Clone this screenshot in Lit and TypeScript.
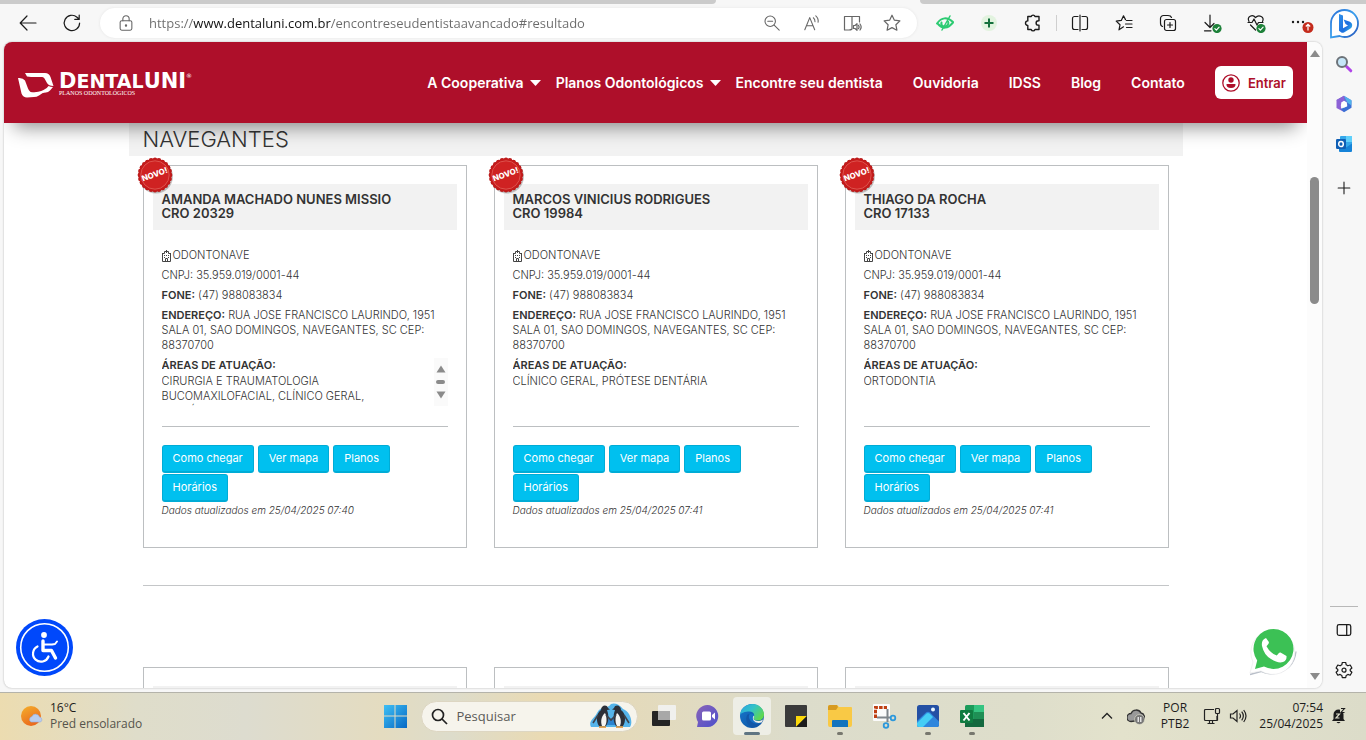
import { LitElement, html, css, svg, nothing } from "lit";
import { customElement, property } from "lit/decorators.js";

interface Dentist {
  name: string;
  cro: string;
  areas: string;
  updated: string;
  scroll?: boolean;
}

const DENTISTS: Dentist[] = [
  {
    name: "AMANDA MACHADO NUNES MISSIO",
    cro: "CRO 20329",
    areas: "CIRURGIA E TRAUMATOLOGIA BUCOMAXILOFACIAL, CLÍNICO GERAL, DENTÍSTICA",
    updated: "25/04/2025 07:40",
    scroll: true,
  },
  { name: "MARCOS VINICIUS RODRIGUES", cro: "CRO 19984", areas: "CLÍNICO GERAL, PRÓTESE DENTÁRIA", updated: "25/04/2025 07:41" },
  { name: "THIAGO DA ROCHA", cro: "CRO 17133", areas: "ORTODONTIA", updated: "25/04/2025 07:41" },
];

const line = (size: number, body: unknown, color = "#1b1b1b") => html`
  <svg width=${size} height=${size} viewBox="0 0 20 20" fill="none" stroke=${color} stroke-width="1.2"
    stroke-linecap="round" stroke-linejoin="round" aria-hidden="true">${body}</svg>`;

const art = (w: number, h: number, body: unknown) => html`
  <svg width=${w} height=${h} viewBox="0 0 ${w} ${h}" aria-hidden="true">${body}</svg>`;

const check = svg`<circle cx="15" cy="15.5" r="4.6" fill="#1d8139" stroke="none"/><path d="M12.9 15.6l1.5 1.5 2.7-2.9" stroke="#fff"/>`;

const icons = {
  back: line(20, svg`<path d="M18 10H2.5M9 3L2.2 10 9 17"/>`),
  reload: line(20, svg`<path d="M17.6 10A7.7 7.7 0 1 1 15 4.2L17 6M17.2 2v4.4h-4.4"/>`),
  lock: line(18, svg`<rect x="3.5" y="7.5" width="13" height="10.5" rx="1.8"/><path d="M6.5 7.5V5.4a3.5 3.5 0 0 1 7 0v2.1"/><circle cx="10" cy="12.8" r=".7" fill="#666"/>`, "#666"),
  zoomOut: line(18, svg`<circle cx="8" cy="8" r="5.8"/><path d="M12.4 12.4L18 18M5.3 8h5.4"/>`, "#666"),
  read: line(18, svg`<path d="M2 17.5L7.5 4 13 17.5M4 13h7M11.5 4.2q2 1.6 1.8 4.3M14.2 2q3.2 2.6 2.6 7.2"/>`, "#666"),
  reader: line(20, svg`<path d="M10 3.5V16M10 16c-1 1-2 1-3 1H2.5V3.5H10M10 3.5h7.5V9"/><path d="M11.5 12.5v3h1.5l2 1.8v-6.6l-2 1.8zM16.5 12.3q1.2 1.7 0 3.4M18 11q2.3 3 0 6" />`, "#666"),
  star: line(20, svg`<path d="M10 2.2l2.4 5 5.5.7-4 3.9 1 5.4-4.9-2.6-4.9 2.6 1-5.4-4-3.9 5.5-.7z"/>`, "#666"),
  eye: html`<svg width="20" height="20" viewBox="0 0 20 20" fill="none" stroke="#2ccb72" stroke-width="2" stroke-linecap="round" aria-hidden="true">
    <path d="M2 10.5q7-9.5 16-1.5M3 11q7 8 15-1.5" /><path d="M6.5 9.5a3.2 3.2 0 0 0 2 4M13 8.5a3.3 3.3 0 0 1-2.5 4.8"/><path d="M15 3L7 17" stroke-width="1.5"/></svg>`,
  plus: html`<svg width="20" height="20" viewBox="0 0 20 20" aria-hidden="true"><circle cx="10" cy="10" r="8" fill="#e2f3df"/><path d="M10 5.5v9M5.5 10h9" stroke="#14703c" stroke-width="2"/></svg>`,
  puzzle: line(20, svg`<path d="M6 3.5h2.2a2 2 0 0 1 3.8 0h4v4.2h-.7a2.2 2.2 0 0 0 0 4.4h.7v4.4h-4a2 2 0 0 1-3.8 0H4.800v-4a2.300 2.300 0 1 1 0-4.600V3.500z" stroke-width="1.4"/>`),
  split: line(20, svg`<path d="M8 3.5H4.5a2 2 0 0 0-2 2v9a2 2 0 0 0 2 2H8M12 3.5h3.5a2 2 0 0 1 2 2v9a2 2 0 0 1-2 2H12M10 2v16"/>`),
  favorites: line(20, svg`<path d="M9.5 13.8L5 16.8l1-5-3.800-3.700 5.100-.7L9.500 2.800l2 3.800M12.500 7.500H18M11.500 11H18M12.500 14.500H18"/>`),
  collections: line(20, svg`<rect x="6.5" y="6.5" width="11" height="11" rx="2"/><path d="M12 9.5v5M9.5 12h5M4.5 13.5C2.8 13 2.5 11.5 2.5 10V5.5a3 3 0 0 1 3-3H10c1.600 0 3 .5 3.500 2"/>`),
  download: line(20, svg`<path d="M8 2v12M3 9.5l5 5 4-4M2.5 17.8H9"/>${check}`),
  heart: line(20, svg`<path d="M3 8.5C.5 3.5 6.5.8 9.5 4.5 13 .8 18.800 4 16.500 8.500M2 9.500h4l2-3.500 3 6 1.500-2.500H17M4.500 12l5 5"/>${check}`),
  dots: html`<svg width="28" height="20" viewBox="0 0 28 20" aria-hidden="true"><g fill="#1b1b1b"><circle cx="7" cy="9" r="1.2"/><circle cx="12" cy="9" r="1.2"/><circle cx="17" cy="9" r="1.2"/></g><circle cx="22" cy="14.5" r="5.5" fill="#c42b1c"/><path d="M22 17.5v-6M19.8 13.5l2.2-2.2 2.2 2.2" stroke="#fff" stroke-width="1.2" fill="none"/></svg>`,
  bing: art(30, 32, svg`
    <defs><linearGradient id="bg" x1="0" y1="0" x2="1" y2="1"><stop offset="0" stop-color="#2a6fd6"/><stop offset=".5" stop-color="#3aa0ee"/><stop offset="1" stop-color="#2451b8"/></linearGradient>
    <linearGradient id="bb" x1="0" y1="0" x2="1" y2="1"><stop offset="0" stop-color="#2d8fe8"/><stop offset=".6" stop-color="#1e6fe0"/><stop offset="1" stop-color="#35c4e8"/></linearGradient></defs>
    <path d="M2 29.5V15.5A13.5 13.5 0 1 1 15.5 29q-2.500 0-5-1z" fill="#fff" stroke="url(#bg)" stroke-width="1.8"/>
    <path d="M10 6l4 1.6v12.6l5-2.8-2.500-1.300-1.900-4.700 6.300 2.400q3 1.600 2.100 4.700-.5 1.500-2.300 2.600l-5.700 3.300q-1.600.8-3-.2L10 22.700z" fill="url(#bb)"/>`),
  sideSearch: art(18, 18, svg`<path d="M11.5 11.5l4.3 4.3" stroke="#b044e8" stroke-width="3" stroke-linecap="round"/><circle cx="7" cy="7" r="5" fill="#c5e6f8" stroke="#6c7278" stroke-width="2"/>`),
  copilot: art(18, 18, svg`<path d="M9 .8l7 4.2-3.2 5L9 6.5 5.5 10 1.5 5z" fill="#6a6fd8"/><path d="M1.5 5L9 .8v5.7L5.8 9.2 6 13 9 17 1.5 13z" fill="#8d62d6"/><path d="M16.5 5.2v7.6L9 17.2 5.5 14l6.6-2.5.4-4z" fill="#3b6fd4"/><path d="M9 1l7.5 4.2-.3 5-3.7-2.4z" fill="#4fb3ec"/><path d="M9 5.8L11.9 7.4v3.3L9 12.4 6.2 10.7V7.4z" fill="#fff"/>`),
  outlook: art(18, 18, svg`<rect x="5" y="1" width="12" height="14" rx="1" fill="#35a8ea"/><path d="M11 1h6v6h-6z" fill="#5fd0fb"/><path d="M4 8.5l7 4 6-4V16a1 1 0 0 1-1 1H5a1 1 0 0 1-1-1z" fill="#1583d8"/><rect x="1" y="4" width="10" height="10" rx="1.2" fill="#0f5fb5"/><ellipse cx="6" cy="9" rx="2.3" ry="2.6" fill="none" stroke="#fff" stroke-width="1.5"/>`),
  add: line(18, svg`<path d="M10 3.5v13M3.5 10h13"/>`),
  panel: line(18, svg`<rect x="2.5" y="4" width="15" height="12" rx="2" stroke-width="1.4"/><path d="M13 4v12" stroke-width="1.4"/>`),
  gear: line(20, svg`<path d="M8.3 2.5h3.4l.5 2.3 1.7 1 2.3-.8 1.7 3-1.7 1.5v1.200l1.700 1.500-1.700 3-2.300-.8-1.700 1-.5 2.200H8.300l-.5-2.200-1.700-1-2.300.8-1.700-3 1.700-1.500V9.500L2.100 8l1.700-3 2.300.8 1.700-1z"/><circle cx="10" cy="10.2" r="2"/>`),
};

const taskIcons = {
  windows: art(24, 24, svg`<defs><linearGradient id="wn" x1="0" y1="0" x2="1" y2="1"><stop offset="0" stop-color="#3fc0f5"/><stop offset="1" stop-color="#0668c4"/></linearGradient></defs><path d="M1 1h10.5v10.5H1zM12.5 1H24v10.5H12.5zM1 12.5h10.5V24H1zM12.5 12.5H24V24H12.5z" fill="url(#wn)"/>`),
  view: art(24, 24, svg`<rect x="0" y="7" width="18" height="15" rx="1" fill="#242424"/><rect x="6" y="1" width="18" height="15" rx="1" fill="#f2f2f2" opacity=".9"/><rect x="6" y="7" width="12" height="9" fill="#a8a8a8"/>`),
  chat: art(24, 24, svg`<defs><linearGradient id="ch" x1="0" y1="0" x2="1" y2="1"><stop offset="0" stop-color="#8a63b8"/><stop offset="1" stop-color="#4c50cc"/></linearGradient></defs><path d="M1 23l1-5A11 11 0 1 1 12 23z" fill="url(#ch)"/><rect x="6" y="7.5" width="9" height="9" rx="1.5" fill="#fff"/><path d="M16 11l3-2.500v7L16 13z" fill="#fff"/>`),
  edge: art(26, 26, svg`<defs><linearGradient id="e1" x1="0" y1="0" x2="1" y2=".6"><stop offset="0" stop-color="#2aa3e0"/><stop offset=".5" stop-color="#33c2c9"/><stop offset="1" stop-color="#5fd84f"/></linearGradient><linearGradient id="e2" x1="0" y1="0" x2="1" y2="1"><stop offset="0" stop-color="#1878cf"/><stop offset="1" stop-color="#0c4f9c"/></linearGradient></defs>
    <circle cx="13" cy="13" r="12" fill="url(#e2)"/><path d="M1 12C2 4.5 8 1 13.5 1 20 1 25 6 25 11.5c0 4-3 6-6 6-3.500 0-5-1.500-4.500-3 1.500-1.500 1-6-4-6C6 8.500 2 10 1 12z" fill="url(#e1)"/><path d="M9.5 12.5c-2 4 1 9.500 7 9.500 3 0 5-1 6.500-2.500-1.500.5-8 1-9-4.500-.2-1.500.8-2.500.5-3.500-1.200-1.500-4-1-5 1z" fill="#1672c8"/><path d="M14.5 12.5q1.500 1 0 2.500c0 2 2 3 4.500 3 2 0 4-.5 5.300-2l-1.500 3.500q-6 1.500-8.300-2-1.500-2.500 0-5z" fill="#eeeee6"/><path d="M8.5 11.5C5.5 16 8 23 14 24.500c3.500-.3 7-2.500 8.800-5C18 22 11.500 20 10 15c-.3-1.500 0-3 .5-4z" fill="#1257a8"/>`),
  notes: art(24, 24, svg`<rect x="1" y="1" width="22" height="22" rx="1" fill="#3a3a3a"/><path d="M12 12h11L12 23z" fill="#fbd80a"/><path d="M12 23l11-11v11z" fill="#1c1c1c"/>`),
  folder: art(26, 24, svg`<path d="M1 3a2 2 0 0 1 2-2h7l2 2h12a1 1 0 0 1 1 1v17a2 2 0 0 1-2 2H3a2 2 0 0 1-2-2z" fill="#f9c945"/><path d="M1 3a2 2 0 0 1 2-2h7l1 2-2 3H1z" fill="#d79a20"/><path d="M5 17a1 1 0 0 1 1-1h14a1 1 0 0 1 1 1v6H5z" fill="#1273bd"/>`),
  snip: art(26, 26, svg`<rect x="2" y="1" width="17" height="17" rx="1" fill="#fbfbfb"/><path d="M4.5 15V4.5H16" stroke="#bf3f12" stroke-width="3" fill="none" stroke-dasharray="3.5 1.2"/><path d="M6 14.5h13M16.5 6v13" stroke="#80868c" stroke-width="2"/><circle cx="22" cy="15" r="2.3" fill="none" stroke="#2c98dc" stroke-width="1.8"/><circle cx="15" cy="22.5" r="2.3" fill="none" stroke="#2c98dc" stroke-width="1.8"/>`),
  photos: art(24, 24, svg`<rect x="1" y="1" width="22" height="22" rx="2.5" fill="#2450a4"/><path d="M1 17L10 8.500q2-1.700 4 0l9 9V21q0 2-2 2H3q-2 0-2-2z" fill="#2f86dc"/><path d="M1 19L10.500 9.500q1.500-1.200 3 0L17 13 7 23H3q-2 0-2-2z" fill="#45cdf5"/><circle cx="17" cy="5.5" r="2" fill="#e8f6ff"/>`),
  excel: art(26, 24, svg`<rect x="6" y="1" width="19" height="22" rx="1.5" fill="#1c9c5b"/><path d="M15 1h10v7H15z" fill="#35c481"/><path d="M6 15h19v8H6z" fill="#14693f"/><path d="M15 8h10v7H15z" fill="#1f8f55"/><rect x="1" y="6" width="13" height="13" rx="1" fill="#107c41"/><path d="M4.5 9l6 7.5M10.5 9l-6 7.5" stroke="#fff" stroke-width="2"/>`),
  penguins: art(44, 26, svg`<path d="M2 24C-1 18 5 16 8 10 12 2 18 7 22 1q6-2 12 5c8 3 10 14 7 18z" fill="#55b4ea"/><path d="M12 22h22v-4l-10-3-12 3z" fill="#2b83cf"/>
    <path d="M10 23C7 19 7 10 12 7c0-5 6-6 7-2l2 1.500-3 .5c2 5 2 12-1 16z" fill="#2c3039"/><path d="M13 23c-2-5 0-11 3-13 2 4 2 10 0 13z" fill="#f4f4f2"/><path d="M34 23c3-4 3-13-2-16 0-5-6-6-7-2l-2 1.500 3 .5c-2 5-2 12 1 16z" fill="#2c3039"/><path d="M31 23c2-5 0-11-3-13-2 4-2 10 0 13z" fill="#f4f4f2"/>
    <path d="M9 12L4 20M17 12l5 5 5-5M35 12l5 8" stroke="#3d424c" stroke-width="1.6" fill="none"/><path d="M10 24h7M27 24h7" stroke="#e08c2a" stroke-width="1.5"/>`),
  weather: art(24, 22, svg`<defs><linearGradient id="sun" x1="0" y1="0" x2=".5" y2="1"><stop offset="0" stop-color="#f5b02c"/><stop offset="1" stop-color="#ea6a1d"/></linearGradient></defs><circle cx="11" cy="11" r="10" fill="url(#sun)"/><path d="M11 17a3 3 0 0 1 1-5.500 4 4 0 0 1 7.500.5 2.700 2.700 0 0 1 1 5z" fill="#b9cdee" stroke="#93aadb" stroke-width=".6"/>`),
};

@customElement("dentist-card")
export class DentistCard extends LitElement {
  @property({ attribute: false }) dentist!: Dentist;

  static styles = css`
    :host { display: block; position: relative; border: 1px solid #bcbfc1; font: 300 11px/15px Inter, sans-serif; color: #333; min-height: 381px; background: #fff; }
    .badge { position: absolute; left: -8px; top: -10px; width: 40px; height: 40px; }
    .title { margin: 18px 9px; padding: 8px 9px 10px; background: #f2f2f2; font-size: 13px; line-height: 14px; font-weight: 600; }
    .body { padding: 0 18px; display: flex; flex-direction: column; gap: 5px; }
    .clinic { display: flex; align-items: center; gap: 2px; }
    p { margin: 0; }
    b { font-weight: 600; }
    .areas { height: 48px; overflow: hidden; display: flex; justify-content: space-between; }
    .list { width: 228px; }
    .list b { display: block; margin-bottom: 1px; }
    .bar { width: 14px; background: #fafafa; display: flex; flex-direction: column; align-items: center; justify-content: space-evenly; }
    .thumb { width: 9px; height: 4px; border-radius: 2px; background: #8b8b8b; }
    hr { width: 100%; margin: 15px 0 13px; border: 0; border-top: 1px solid #bcbfc1; }
    .actions { display: flex; flex-wrap: wrap; gap: 1px 4px; }
    .actions button { height: 28px; padding: 0 10px 1px; border: 1px solid #00acd6; border-bottom-width: 2px; border-radius: 3px; background: #00c0ef; color: #fff; font: 400 11px/15px Inter, sans-serif; }
    .updated { font-size: 10px; font-style: italic; margin-top: -4px; }
  `;

  render() {
    const d = this.dentist;
    const teeth = Array.from({ length: 24 }, (_, i) => {
      const a = (i / 24) * Math.PI * 2;
      return svg`<circle cx=${19 + 15.2 * Math.cos(a)} cy=${19 + 15.2 * Math.sin(a)} r="2.2" fill="#b81a1a"/>`;
    });
    return html`
      <svg class="badge" viewBox="0 0 40 40" role="img" aria-label="Novo">
        <circle cx="20" cy="20.5" r="17" fill="#000" opacity=".22"/>
        ${teeth}
        <circle cx="19" cy="19" r="16.4" fill="#c41b1b"/>
        <circle cx="19" cy="19" r="14.2" fill="#cf2222" stroke="#e8746c" stroke-width=".6"/>
        <text x="19" y="21" text-anchor="middle" transform="rotate(-20 19 19)" font-family="Inter, sans-serif" font-size="8" font-weight="800" fill="#fff">NOVO!</text>
      </svg>
      <div class="title">${d.name}<br />${d.cro}</div>
      <div class="body">
        <p class="clinic">
          <svg width="9" height="12" viewBox="0 0 9 12" fill="none" stroke="#444" stroke-width="1" aria-hidden="true">
            <path d="M.5 3V11.5h8V3M.5 3.500h2v-2h4v2h2M3.500 11.500v-3h2v3M4.500 0v3"/><path d="M2 5.500h1M4 5.500h1M6 5.500h1M2 7.500h1M6 7.500h1"/>
          </svg>ODONTONAVE</p>
        <p>CNPJ: 35.959.019/0001-44</p>
        <p><b>FONE:</b> (47) 988083834</p>
        <p><b>ENDEREÇO:</b> RUA JOSE FRANCISCO LAURINDO, 1951 SALA 01, SAO DOMINGOS, NAVEGANTES, SC CEP: 88370700</p>
        <div class="areas">
          <div class="list"><b>ÁREAS DE ATUAÇÃO:</b>${d.areas}</div>
          ${d.scroll
            ? html`<div class="bar">
                <svg width="10" height="8" viewBox="0 0 10 8"><path d="M5 .5L9.500 7.500H.5z" fill="#8b8b8b"/></svg>
                <span class="thumb"></span>
                <svg width="10" height="8" viewBox="0 0 10 8"><path d="M5 7.500L9.500.5H.5z" fill="#8b8b8b"/></svg>
              </div>`
            : nothing}
        </div>
        <hr />
        <div class="actions">
          <button>Como chegar</button><button>Ver mapa</button><button>Planos</button><button>Horários</button>
        </div>
        <p class="updated">Dados atualizados em ${d.updated}</p>
      </div>
    `;
  }
}

@customElement("site-header")
export class SiteHeader extends LitElement {
  static styles = css`
    :host { display: flex; align-items: center; justify-content: space-between; height: 81px; padding: 0 14px; box-sizing: border-box; background: #ae0f2a; color: #fff; font: 600 14px/18px Inter, sans-serif; box-shadow: 0 14px 18px -10px rgba(0, 0, 0, 0.45); }
    a { color: inherit; text-decoration: none; }
    .brand { display: flex; align-items: center; gap: 4px; padding-top: 4px; }
    .words { display: flex; flex-direction: column; }
    .name { font: 700 21px/16px "DejaVu Sans", sans-serif; }
    .small { font-size: 19px; }
    .reg { font-size: 6px; font-weight: 400; vertical-align: 10px; line-height: 6px; }
    .tag { font: 6px/8px "Liberation Serif", serif; }
    nav { display: flex; align-items: center; gap: 30px; }
    .drop { display: flex; align-items: center; gap: 6px; margin-right: -15px; }
    .enter { display: flex; align-items: center; gap: 8px; height: 33px; padding: 0 7px; border: 0; border-radius: 6px; background: #fff; color: #ae0f2a; font: 600 13px/18px Inter, sans-serif; }
  `;

  render() {
    const caret = html`<svg width="11" height="6" viewBox="0 0 11 6" aria-hidden="true"><path d="M0 0h11L5.500 6z" fill="#fff"/></svg>`;
    return html`
      <a class="brand" href="#" aria-label="DentalUNI">
        <svg width="37" height="26" viewBox="0 0 37 26" fill="#fff" aria-hidden="true">
          <path d="M0 6q5-.5 7 2.500l3 8q1.500 4 6 4.500l11-1.500-6 4q-2.500 1.500-5 1.500l-7 .5q-4 0-5.500-4z"/>
          <path d="M7 1h20q4 0 5.500 4l3 9q-5 0-6.500-3L26.500 6.500q-.8-1.600-2.500-1.500H13L9 4.500z"/>
          <path d="M35 15l-3 3.500q-2 1.800-4 2l-12 1.500q-2 0-3.500-1.500 9-.5 13-2.500 4-2 5-4 2 1 4.500 1z"/>
        </svg>
        <span class="words">
          <span class="name">D<span class="small">ENTAL</span>UNI<span class="reg">®</span></span>
          <span class="tag">PLANOS ODONTOLÓGICOS</span>
        </span>
      </a>
      <nav>
        <a class="drop" href="#">A Cooperativa ${caret}</a>
        <a class="drop" href="#">Planos Odontológicos ${caret}</a>
        <a href="#">Encontre seu dentista</a>
        <a href="#">Ouvidoria</a>
        <a href="#">IDSS</a>
        <a href="#">Blog</a>
        <a href="#">Contato</a>
        <button class="enter">
          <svg width="18" height="18" viewBox="0 0 18 18" aria-hidden="true"><circle cx="9" cy="9" r="8.2" fill="none" stroke="#ae0f2a" stroke-width="1.3"/><circle cx="9" cy="6" r="2.7" fill="#ae0f2a"/><path d="M4.500 10h9q.3 4-4.500 4t-4.500-4z" fill="#ae0f2a"/></svg>
          Entrar
        </button>
      </nav>
    `;
  }
}

@customElement("task-bar")
export class TaskBar extends LitElement {
  static styles = css`
    :host { display: grid; grid-template-columns: 1fr auto 1fr; align-items: center; height: 48px; box-sizing: border-box; border-top: 1px solid #b4b3aa; padding-bottom: 1px; font: 12px/16px "Open Sans", "Noto Sans", sans-serif; color: #1d1d1d;
      background: linear-gradient(90deg, #ecdcb0 0, #dfddca 10%, #dddccf 18%, #e4dcc0 28%, #dddccb 33%, #eadab2 40%, #e4dabb 46%, #dcdccb 58%, #dedecb 75%, #e3e2cc 82%, #dcdcc9 100%); }
    .weather { display: flex; align-items: center; gap: 6px; padding-left: 20px; }
    .muted { color: #55544c; }
    .center { display: flex; align-items: center; }
    button { position: relative; display: flex; align-items: center; justify-content: center; width: 44px; height: 40px; padding: 0; border: 0; background: none; border-radius: 4px; }
    .active::before { content: ""; position: absolute; inset: 1px 3px; border-radius: 4px; background: #eeeee6; }
    button svg { position: relative; }
    .running::after { content: ""; position: absolute; bottom: 1px; left: 19px; width: 6px; height: 3px; border-radius: 2px; background: #77776e; }
    .active::after { left: 14px; width: 16px; background: #5f7482; }
    .search { display: flex; align-items: center; gap: 9px; width: 217px; height: 31px; margin: 0 4px; padding: 0 4px 0 9px; box-sizing: border-box; border-radius: 16px; background: #f6f4ec; border: 1px solid #ddd6c2; }
    .search input { flex: 1; min-width: 0; border: 0; padding: 0; background: none; outline: none; font: 13px/18px "Open Sans", sans-serif; color: #555; }
    .search input::placeholder { color: #5b5b58; opacity: 1; }
    .tray { display: flex; align-items: center; justify-content: flex-end; gap: 8px; padding-right: 20px; }
    .tray .cloud { margin-left: 6px; }
    .lang { text-align: center; margin: 0 6px 0 8px; }
    .clock { text-align: right; margin-left: 4px; }
  `;

  render() {
    const t = taskIcons;
    return html`
      <div class="weather">${t.weather}<div>16°C<br /><span class="muted">Pred ensolarado</span></div></div>
      <div class="center">
        <button aria-label="Iniciar">${t.windows}</button>
        <label class="search">
          <svg width="17" height="17" viewBox="0 0 17 17" fill="none" stroke="#222" stroke-width="1.7" aria-hidden="true"><circle cx="7" cy="7" r="5.5"/><path d="M11 11l5 5"/></svg>
          <input type="text" placeholder="Pesquisar" aria-label="Pesquisar" />
          ${t.penguins}
        </label>
        <button aria-label="Visão de tarefas">${t.view}</button>
        <button aria-label="Chat">${t.chat}</button>
        <button class="running active" aria-label="Edge">${t.edge}</button>
        <button aria-label="Notas">${t.notes}</button>
        <button class="running" aria-label="Arquivos">${t.folder}</button>
        <button aria-label="Captura">${t.snip}</button>
        <button class="running" aria-label="Fotos">${t.photos}</button>
        <button class="running" aria-label="Excel">${t.excel}</button>
      </div>
      <div class="tray">
        <svg width="12" height="8" viewBox="0 0 12 8" fill="none" stroke="#222" stroke-width="1.3"><path d="M1 6.500l5-5 5 5"/></svg>
        <svg class="cloud" width="18" height="18" viewBox="6 1 18 18"><path d="M10 15.500a4 4 0 0 1 0-8 5.500 5.500 0 0 1 10-.5 4 4 0 0 1 2 7z" fill="#999" stroke="#333" stroke-width="1.3"/><circle cx="18.500" cy="13.500" r="5" fill="#777" stroke="#e3e2cc" stroke-width=".6"/><path d="M17.200 11v5M19.800 11v5" stroke="#fff" stroke-width="1.2"/></svg>
        <div class="lang">POR<br />PTB2</div>
        <svg width="18" height="18" viewBox="0 0 18 18" fill="none" stroke="#222" stroke-width="1.2"><path d="M11 2.500H2.500a1 1 0 0 0-1 1v9a1 1 0 0 0 1 1H14V9M6.500 13.500v3M9.500 13.500v3M4.500 16.500h7"/><rect x="12.500" y="1.500" width="4" height="5" rx="1"/><path d="M14.500 6.500v7"/></svg>
        <svg width="18" height="18" viewBox="0 0 18 18" fill="none" stroke="#222" stroke-width="1.2"><path d="M1.500 7v4h2.500l4 3.500v-11L4 7zM10.500 6.500q2 2.500 0 5M12.700 4.700q3.300 4.300 0 8.600M14.700 3q4.600 6 0 12"/></svg>
        <div class="clock">07:54<br />25/04/2025</div>
        <svg width="15" height="18" viewBox="0 0 15 18"><path d="M1 14l1.500-2V7.500a5 5 0 0 1 10 0V12l1.500 2zM5.500 15h4q-2 2.500-4 0z" fill="#1b1b1b"/><path d="M5 7h3.500L5 11h3.500" fill="none" stroke="#dcdcc9" stroke-width="1.2"/><path d="M9 1h5v5H9z" fill="#dcdcc9"/><path d="M10 1.500h3.500L10 5.500h3.500" fill="none" stroke="#1b1b1b" stroke-width="1.1"/></svg>
      </div>
    `;
  }
}

@customElement("app-root")
export class AppRoot extends LitElement {
  static styles = css`
    :host { display: flex; flex-direction: column; height: 100vh; overflow: hidden; background: #f7f7f7; font-family: "Open Sans", "Noto Sans", sans-serif; }
    .tabs { display: flex; gap: 204px; height: 4px; }
    .tabs span { background: #cbcbcb; }
    .left { flex: 716; border-bottom-right-radius: 4px; }
    .right { flex: 446; border-bottom-left-radius: 4px; }
    .browser { flex: 1; min-height: 0; display: flex; }
    .main { flex: 1; min-width: 0; display: flex; flex-direction: column; }
    .toolbar { display: flex; align-items: center; height: 38px; padding-left: 6px; }
    .tool { flex: none; display: flex; align-items: center; justify-content: center; width: 44px; height: 36px; padding: 0; border: 0; background: none; }
    .address { flex: 1; display: flex; align-items: center; height: 30px; margin: 0 6px; padding: 0 5px 0 17px; border-radius: 15px; background: #fff; box-shadow: 0 0 3px #e4e4e4; }
    .address input { flex: 1; min-width: 0; margin-left: 14px; padding: 0; border: 0; outline: none; font: 13px/20px "Open Sans", sans-serif; color: transparent; background: linear-gradient(90deg, #6b6b6b 44px, #111 44px, #111 182px, #6b6b6b 182px); -webkit-background-clip: text; background-clip: text; }
    .address .tool { width: 40px; height: 30px; }
    .divider { width: 1px; height: 16px; margin: 0 1px; background: #cfcfcf; }
    .view { position: relative; flex: 1; min-height: 0; display: flex; margin: 0 0 4px 4px; border-radius: 8px; overflow: hidden; background: #fff; box-shadow: 0 0 2px #aaa; }
    .window { flex: 1; min-width: 0; overflow: hidden; display: flex; flex-direction: column; }
    site-header { position: relative; z-index: 2; flex: none; }
    .page { flex: 1; min-height: 0; overflow: hidden; }
    .container { max-width: 1054px; margin: 0 auto; }
    h2 { margin: 0 0 9px; padding: 0 14px; height: 33px; background: #f2f2f2; font: 300 22px/33px Inter, sans-serif; color: #333; }
    .cards { display: grid; grid-template-columns: repeat(3, 1fr); gap: 27px; padding: 0 14px; }
    .rule { border: 0; border-top: 1px solid #c4c6c8; margin: 37px 14px 81px; }
    .stub { border: 1px solid #bcbfc1; height: 200px; }
    .stub div { margin: 18px 9px; height: 46px; background: #f2f2f2; }
    .scroll { flex: none; width: 15px; background: #fcfcfc; display: flex; flex-direction: column; align-items: center; padding: 8px 0; box-sizing: border-box; }
    .track { flex: 1; width: 9px; display: flex; flex-direction: column; padding-top: 120px; }
    .thumb { height: 127px; border-radius: 5px; background: #8b8b8b; }
    .access, .whats { position: absolute; padding: 0; border: 0; background: none; display: flex; bottom: 12px; }
    .access { left: 12px; }
    .whats { right: 25px; }
    .side { flex: none; width: 44px; display: flex; flex-direction: column; align-items: center; padding-bottom: 2px; }
    .side .tool { height: 40px; }
    .side .plus { margin-top: 4px; }
    .side hr { margin: auto 0 3px; width: 28px; border: 0; border-top: 1px solid #b8b8b8; }
  `;

  render() {
    const tool = (icon: unknown, label: string, extra = "") => html`<button class="tool ${extra}" aria-label=${label}>${icon}</button>`;
    const i = icons;
    return html`
      <div class="tabs"><span class="left"></span><span class="right"></span></div>
      <div class="browser">
        <div class="main">
          <div class="toolbar">
            ${tool(i.back, "Voltar")}${tool(i.reload, "Atualizar")}
            <div class="address">
              ${i.lock}
              <input type="text" aria-label="Endereço" value="https://www.dentaluni.com.br/encontreseudentistaavancado#resultado" />
              ${tool(i.zoomOut, "Zoom")}${tool(i.read, "Ler em voz alta")}${tool(i.reader, "Leitura avançada")}${tool(i.star, "Favoritar")}
            </div>
            ${tool(i.eye, "Contraste")}${tool(i.plus, "Adicionar")}${tool(i.puzzle, "Extensões")}
            <span class="divider"></span>
            ${tool(i.split, "Dividir tela")}${tool(i.favorites, "Favoritos")}${tool(i.collections, "Coleções")}${tool(i.download, "Downloads")}${tool(i.heart, "Desempenho")}${tool(i.dots, "Mais")}
          </div>
          <div class="view">
            <div class="window">
              <site-header></site-header>
              <main class="page">
                <div class="container">
                  <h2>NAVEGANTES</h2>
                  <div class="cards">${DENTISTS.map((d) => html`<dentist-card .dentist=${d}></dentist-card>`)}</div>
                  <hr class="rule" />
                  <div class="cards">${DENTISTS.map(() => html`<div class="stub"><div></div></div>`)}</div>
                </div>
              </main>
            </div>
            <div class="scroll" aria-hidden="true">
              <svg width="10" height="7" viewBox="0 0 10 7"><path d="M5 0l5 7H0z" fill="#8b8b8b"/></svg>
              <div class="track"><div class="thumb"></div></div>
              <svg width="10" height="7" viewBox="0 0 10 7"><path d="M5 7l5-7H0z" fill="#8b8b8b"/></svg>
            </div>
            <button class="access" aria-label="Acessibilidade">
              <svg width="57" height="57" viewBox="0 0 57 57" fill="none"><circle cx="28.5" cy="28.5" r="28.5" fill="#0048fb"/><circle cx="28.5" cy="28.5" r="23.8" stroke="#fff" stroke-width="1.6"/>
                <circle cx="28" cy="16" r="2.9" fill="#fff"/><path d="M27 22v9.500h8.500l4 7.500" stroke="#fff" stroke-width="3.4" stroke-linejoin="round" stroke-linecap="round"/><path d="M28 25.500h8l3-.5 2-2.500" stroke="#fff" stroke-width="2" stroke-linecap="round" stroke-linejoin="round"/><path d="M21.500 27.500a8 8 0 1 0 11 10" stroke="#fff" stroke-width="2.2" stroke-linecap="round"/></svg>
            </button>
            <button class="whats" aria-label="WhatsApp">
              <svg width="48" height="48" viewBox="0 0 48 48"><path d="M1 46.500l11-3q6 3 13 2 20-3 22-22" fill="none" stroke="#b9bfc9" stroke-width="1.3"/><path d="M1 45l3-11A22 22 0 1 1 12 43z" fill="#fff" stroke="#e8e8ea" stroke-width=".6"/><path d="M6 41l2.200-8.500A20 20 0 1 1 15 38.500z" fill="#3cc155"/>
                <path d="M17 10q-5 2-4 8 2 9 9 13 7 4.500 12 3 4-1.500 3.500-6l-6-3.500q-1-.3-1.800.7l-1.900 2.200q-7-2.500-10.300-9.200l2-2.500q.7-1 .2-2z" fill="#fff"/></svg>
            </button>
          </div>
        </div>
        <aside class="side">
          ${tool(i.bing, "Bing")}${tool(i.sideSearch, "Pesquisa")}${tool(i.copilot, "Microsoft 365")}${tool(i.outlook, "Outlook")}${tool(i.add, "Personalizar", "plus")}
          <hr />
          ${tool(i.panel, "Ocultar barra")}${tool(i.gear, "Configurações")}
        </aside>
      </div>
      <task-bar></task-bar>
    `;
  }
}
